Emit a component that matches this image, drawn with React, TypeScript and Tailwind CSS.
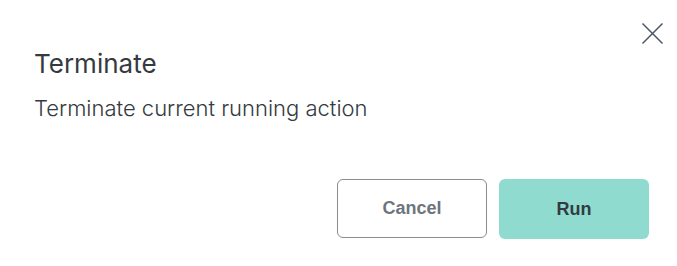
export default function App() {
    return (
        <div className="relative h-[266px] w-full bg-white font-['Inter','Noto_Sans',sans-serif]">
            <button className="absolute left-[641px] top-[22px] p-0 text-[#4b5563]">
                <svg width="23" height="23" viewBox="0 0 23 23" fill="none" stroke="currentColor" strokeWidth="1.5">
                    <path d="M1.5 1.5 21.5 21.5M21.5 1.5 1.5 21.5" />
                </svg>
            </button>

            <div className="flex h-full flex-col pl-[34px] pr-[28px] pt-[48px]">
                <h2 className="text-[26px] leading-[32px] font-normal text-[#343a40]">Terminate</h2>
                <p className="mt-[14px] text-[22px] leading-[28px] font-light text-[#343a40]">Terminate current running action</p>

                <div className="mt-[57px] flex justify-end gap-[12px]">
                    <button className="h-[59px] w-[150px] rounded-[6px] border border-[#8c8c8c] bg-white text-[18px] font-bold text-[#6c757d] font-['Liberation_Sans',sans-serif]">
                        Cancel
                    </button>
                    <button className="h-[60px] w-[150px] rounded-[6px] bg-[#8fdbd0] text-[18px] font-bold text-[#343a40] font-['Liberation_Sans',sans-serif]">
                        Run
                    </button>
                </div>
            </div>
        </div>
    );
}
